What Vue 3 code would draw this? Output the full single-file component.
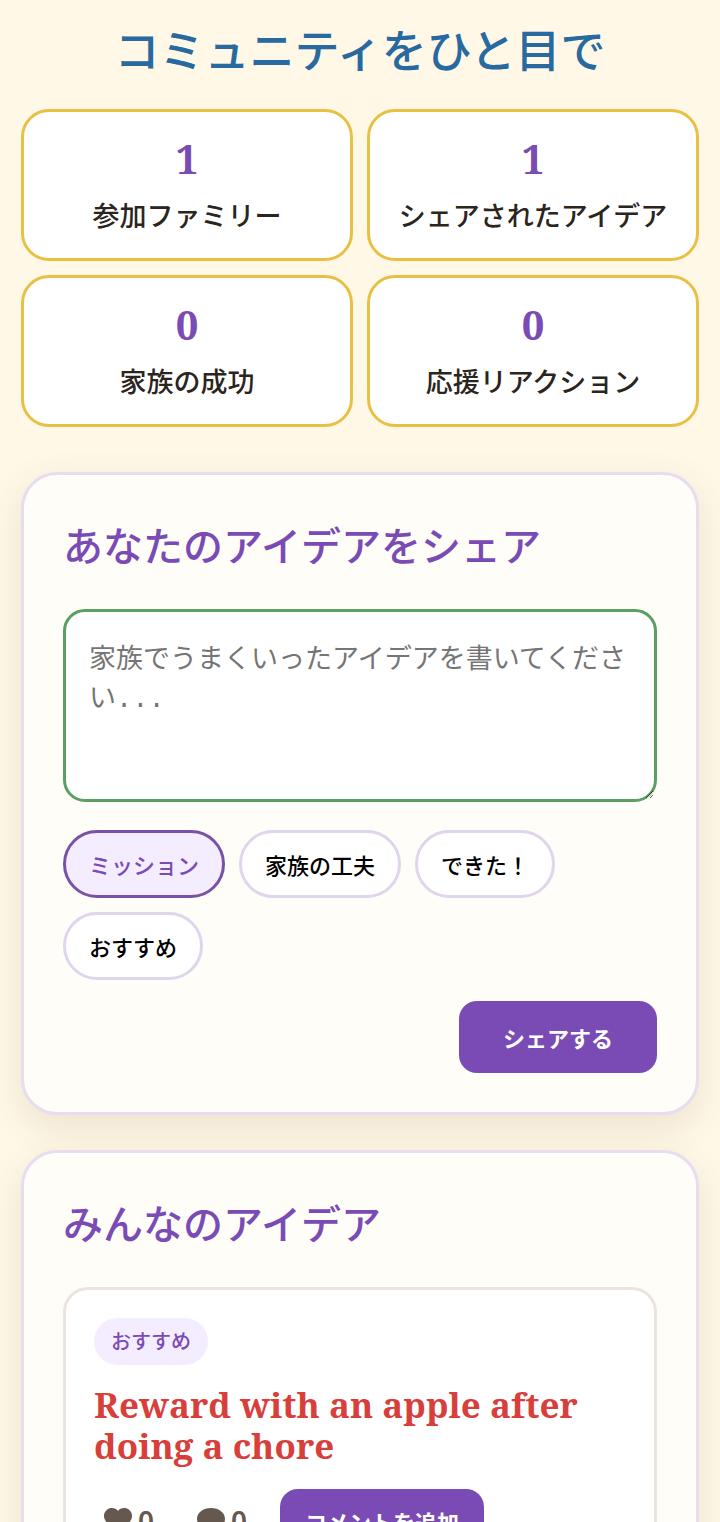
<script setup>
import { ref } from 'vue'

const stats = [
  { value: 1, label: '参加ファミリー' },
  { value: 1, label: 'シェアされたアイデア' },
  { value: 0, label: '家族の成功' },
  { value: 0, label: '応援リアクション' },
]
const categories = ['ミッション', '家族の工夫', 'できた！', 'おすすめ']
const selected = ref('ミッション')
const idea = ref('')
const posts = [
  { tag: 'おすすめ', title: 'Reward with an apple after doing a chore', likes: 0, comments: 0 },
]
</script>

<template>
  <main class="page">
    <section class="overview">
      <h1>コミュニティをひと目で</h1>
      <div class="stats">
        <div v-for="stat in stats" :key="stat.label" class="stat">
          <strong>{{ stat.value }}</strong>
          <span>{{ stat.label }}</span>
        </div>
      </div>
    </section>

    <section class="panel">
      <h2 id="share-title">あなたのアイデアをシェア</h2>
      <form @submit.prevent>
        <textarea
          v-model="idea"
          aria-labelledby="share-title"
          placeholder="家族でうまくいったアイデアを書いてください..."
        ></textarea>
        <div class="chips">
          <button
            v-for="category in categories"
            :key="category"
            type="button"
            class="chip"
            :class="{ active: category === selected }"
            :aria-pressed="category === selected"
            @click="selected = category"
          >{{ category }}</button>
        </div>
        <div class="submit-row">
          <button type="submit" class="primary share">シェアする</button>
        </div>
      </form>
    </section>

    <section class="panel">
      <h2>みんなのアイデア</h2>
      <article v-for="post in posts" :key="post.title" class="post">
        <span class="tag">{{ post.tag }}</span>
        <h3>{{ post.title }}</h3>
        <div class="actions">
          <button type="button" class="reaction" aria-label="いいね">
            <svg viewBox="0 0 28 26" aria-hidden="true">
              <path d="M14 3C11.500-.5 6-.8 2.700 2C-.8 5-.8 10 2 13.500C5 17.500 10 20.500 14 25.500C18 20.500 23 17.500 26 13.500C28.800 10 28.800 5 25.300 2C22 -.8 16.500-.5 14 3Z" />
            </svg>
            <span>{{ post.likes }}</span>
          </button>
          <button type="button" class="reaction" aria-label="コメント">
            <svg viewBox="0 0 28 26" aria-hidden="true">
              <path d="M14 0C6 0 0 4.700 0 11C0 15 2.300 18 6 20C6 22.500 4.500 24.500 3 26C7 25.800 10 24 12 22H14C22 22 28 17.300 28 11S22 0 14 0Z" />
            </svg>
            <span>{{ post.comments }}</span>
          </button>
          <button type="button" class="primary comment">コメントを追加</button>
        </div>
      </article>
    </section>
  </main>
</template>

<style>
body {
  margin: 0;
  background: #fff8e7;
}
</style>

<style scoped>
.page {
  box-sizing: border-box;
  padding: 17px 21px 44px;
  overflow: hidden;
  color: #2b2520;
  background: #fff8e7;
  font-family: "Noto Serif", "DejaVu Serif Condensed", "Noto Sans CJK JP", serif;
}
h1, h2, h3 {
  margin: 0;
  font-weight: 500;
}
h1 {
  color: #2869a0;
  font-size: 45px;
  line-height: 68px;
  text-align: center;
}
.stats {
  display: grid;
  grid-template-columns: 1fr 1fr;
  gap: 14px;
  margin-top: 24px;
}
.stat {
  display: flex;
  flex-direction: column;
  align-items: center;
  gap: 10px;
  padding: 20px 10px 22px;
  border: 3px solid #e8c144;
  border-radius: 28px;
  background: #fff;
}
.stat strong {
  color: #7b4bb5;
  font-size: 40px;
  line-height: 54px;
  font-weight: 700;
}
.stat span {
  font-size: 27px;
  line-height: 40px;
  font-weight: 500;
}
.panel {
  margin-top: 45px;
  padding: 39px;
  border: 3px solid #e7dcf0;
  border-radius: 36px;
  background: #fffdf8;
  box-shadow: 0 12px 36px rgba(92, 70, 30, 0.12);
}
.panel + .panel {
  margin-top: 35px;
}
h2 {
  color: #7b4bb5;
  font-size: 40px;
  line-height: 64px;
}
textarea {
  display: block;
  box-sizing: border-box;
  width: 100%;
  height: 193px;
  margin-top: 31px;
  padding: 30px 23px 20px;
  resize: vertical;
  border: 3px solid #5ba062;
  border-radius: 22px;
  background: #fff;
  font: 27px/39px "Liberation Mono", "Noto Sans CJK JP", monospace;
}
textarea::placeholder {
  color: #757575;
}
button {
  margin: 0;
  font-family: "Noto Sans CJK JP", sans-serif;
  font-weight: 500;
}
.chips {
  display: flex;
  flex-wrap: wrap;
  gap: 14px;
  margin-top: 28px;
}
.chip {
  height: 68px;
  padding: 0 23px;
  border: 3px solid #dfd5ed;
  border-radius: 34px;
  background: #fff;
  color: #000;
  font-size: 22px;
}
.chip.active {
  border-color: #7852a5;
  background: #f4edff;
  color: #7b4bb5;
}
.submit-row {
  display: flex;
  justify-content: flex-end;
  margin-top: 21px;
}
.primary {
  border: 0;
  border-radius: 18px;
  background: #7b4bb5;
  color: #fff;
  font-size: 22px;
  font-weight: 600;
}
.share {
  height: 72px;
  padding: 0 44px;
}
.post {
  margin-top: 31px;
  padding: 28px;
  border: 3px solid #ece5df;
  border-radius: 25px;
  background: #fff;
}
.tag {
  display: block;
  width: fit-content;
  padding: 1px 17px 0;
  border-radius: 24px;
  background: #f4edff;
  color: #7b4bb5;
  font-size: 20px;
  line-height: 46px;
  font-weight: 500;
}
h3 {
  margin-top: 19px;
  color: #d83f3b;
  font-size: 35px;
  line-height: 41px;
  font-weight: 700;
}
.actions {
  display: flex;
  align-items: center;
  margin-top: 23px;
}
.reaction {
  display: flex;
  align-items: center;
  gap: 6px;
  margin-right: 23px;
  padding: 0 10px;
  border: 0;
  background: none;
  color: #65584e;
  font: 600 28px/40px "Noto Sans", sans-serif;
}
.reaction svg {
  width: 28px;
  height: 26px;
  fill: #65584e;
}
.comment {
  height: 64px;
  padding: 0 25px;
}
</style>
